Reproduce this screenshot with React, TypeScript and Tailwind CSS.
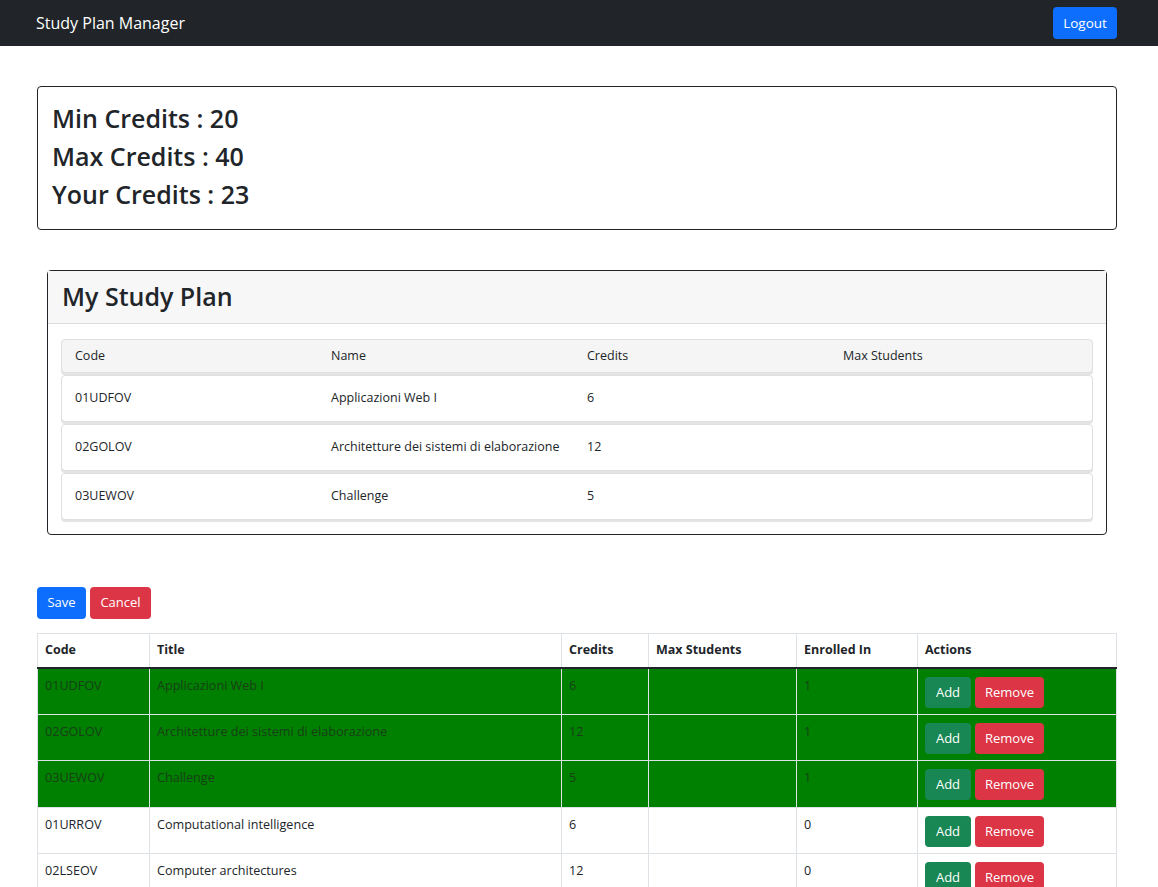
import React from "react";

interface Course {
  code: string;
  name: string;
  credits: number;
  maxStudents?: number;
  enrolled: number;
}

const PLAN: Course[] = [
  { code: "01UDFOV", name: "Applicazioni Web I", credits: 6, enrolled: 1 },
  { code: "02GOLOV", name: "Architetture dei sistemi di elaborazione", credits: 12, enrolled: 1 },
  { code: "03UEWOV", name: "Challenge", credits: 5, enrolled: 1 },
];

const COURSES: Course[] = [
  ...PLAN,
  { code: "01URROV", name: "Computational intelligence", credits: 6, enrolled: 0 },
  { code: "02LSEOV", name: "Computer architectures", credits: 12, enrolled: 0 },
];

const inPlan = (code: string) => PLAN.some((c) => c.code === code);

function Navbar() {
  return (
    <nav className="flex h-[46px] items-center justify-between bg-[#212529] pl-[36px] pr-[41px]">
      <span className="text-[16px] text-white">Study Plan Manager</span>
      <button className="h-[32px] w-[64px] rounded-[4px] bg-[#0d6efd] text-[13.5px] text-white">
        Logout
      </button>
    </nav>
  );
}

function CreditsBox() {
  return (
    <div className="rounded-[4px] border border-[#212529] px-[14px] pb-[16px] pt-[12px] text-[25px] font-semibold leading-[38px] text-[#212529]">
      <div>Min Credits : 20</div>
      <div>Max Credits : 40</div>
      <div>Your Credits : 23</div>
    </div>
  );
}

function PlanRow({ cells, header }: { cells: string[]; header?: boolean }) {
  return (
    <div
      className={
        "grid grid-cols-[256px_256px_256px_1fr] items-center rounded-[4px] border border-[#dfdfdf] pl-[13px] text-[12.5px] text-[#212529] shadow-[0_2px_0_#e4e4e4] " +
        (header ? "h-[34px] bg-[#f5f5f5]" : "h-[47px] bg-white")
      }
    >
      {cells.map((c, i) => (
        <span key={i}>{c}</span>
      ))}
    </div>
  );
}

function StudyPlan() {
  return (
    <div className="mx-[10px] mt-[40px] rounded-[4px] border border-[#212529]">
      <div className="flex h-[53px] items-center border-b border-[#dcdcdc] bg-[#f7f7f7] px-[14px] text-[25px] font-semibold text-[#212529]">
        My Study Plan
      </div>
      <div className="flex flex-col gap-[2px] px-[13px] pb-[14px] pt-[15px]">
        <PlanRow header cells={["Code", "Name", "Credits", "Max Students"]} />
        {PLAN.map((c) => (
          <PlanRow key={c.code} cells={[c.code, c.name, String(c.credits), ""]} />
        ))}
      </div>
    </div>
  );
}

function CourseTable() {
  const th = "border border-[#dee2e6] px-[7px] py-[7px] text-left text-[12.5px] font-bold text-[#212529]";
  return (
    <table className="w-full border-collapse text-[12.6px]">
      <thead>
        <tr className="h-[34px]">
          <th className={th + " w-[112px]"}>Code</th>
          <th className={th + " w-[412px]"}>Title</th>
          <th className={th + " w-[87px]"}>Credits</th>
          <th className={th + " w-[148px]"}>Max Students</th>
          <th className={th + " w-[121px]"}>Enrolled In</th>
          <th className={th}>Actions</th>
        </tr>
      </thead>
      <tbody className="border-t-2 border-t-[#212529]">
        {COURSES.map((c) => {
          const green = inPlan(c.code);
          const td =
            "h-[46.5px] border border-[#dee2e6] px-[7px] pt-[8px] align-top " +
            (green ? "bg-[#008000] text-[#183f18]" : "bg-white text-[#212529]");
          return (
            <tr key={c.code}>
              <td className={td}>{c.code}</td>
              <td className={td}>{c.name}</td>
              <td className={td}>{c.credits}</td>
              <td className={td}>{c.maxStudents ?? ""}</td>
              <td className={td}>{c.enrolled}</td>
              <td className={td}>
                <div className="flex gap-[4px]">
                  <button className="h-[31px] w-[46px] rounded-[4px] bg-[#198754] text-[13px] text-white">
                    Add
                  </button>
                  <button className="h-[31px] w-[69px] rounded-[4px] bg-[#dc3545] text-[13px] text-white">
                    Remove
                  </button>
                </div>
              </td>
            </tr>
          );
        })}
      </tbody>
    </table>
  );
}

export default function App() {
  return (
    <div className="min-h-screen bg-white font-['Open_Sans',sans-serif]">
      <Navbar />
      <main className="px-[37px] pt-[40px] pr-[41px]">
        <CreditsBox />
        <StudyPlan />
        <div className="mt-[52px] flex gap-[4px]">
          <button className="h-[32px] w-[49px] rounded-[4px] bg-[#0d6efd] text-[13px] text-white">Save</button>
          <button className="h-[32px] w-[61px] rounded-[4px] bg-[#dc3545] text-[13px] text-white">Cancel</button>
        </div>
        <div className="mt-[14px]">
          <CourseTable />
        </div>
      </main>
    </div>
  );
}
